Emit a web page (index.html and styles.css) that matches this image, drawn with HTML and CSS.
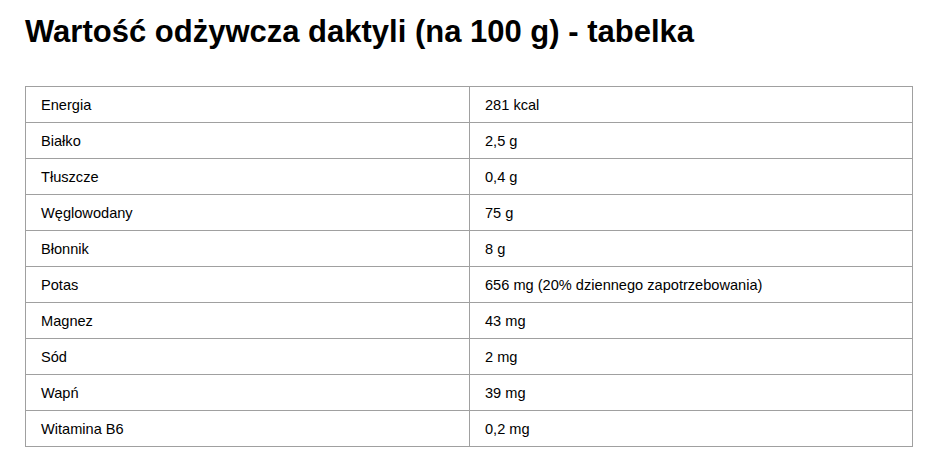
FILE: index.html
```html
<!DOCTYPE html>
<html lang="pl">
<head>
<meta charset="utf-8">
<link rel="stylesheet" href="styles.css">
</head>
<body>
<div class="page">
  <h2 class="title">Wartość odżywcza daktyli (na 100 g) - tabelka</h2>
  <table class="nutri">
    <tbody>
      <tr><td>Energia</td><td>281 kcal</td></tr>
      <tr><td>Białko</td><td>2,5 g</td></tr>
      <tr><td>Tłuszcze</td><td>0,4 g</td></tr>
      <tr><td>Węglowodany</td><td>75 g</td></tr>
      <tr><td>Błonnik</td><td>8 g</td></tr>
      <tr><td>Potas</td><td>656 mg (20% dziennego zapotrzebowania)</td></tr>
      <tr><td>Magnez</td><td>43 mg</td></tr>
      <tr><td>Sód</td><td>2 mg</td></tr>
      <tr><td>Wapń</td><td>39 mg</td></tr>
      <tr><td>Witamina B6</td><td>0,2 mg</td></tr>
    </tbody>
  </table>
</div>
</body>
</html>
```
FILE: styles.css
```css
html, body {
  margin: 0;
  padding: 0;
  background: #fff;
}
.page {
  padding: 14px 27px 0 25px;
  font-family: "Liberation Sans", Arial, sans-serif;
  color: #000;
}
.title {
  margin: 0 0 36px 0;
  font-size: 31px;
  line-height: 36px;
  font-weight: bold;
}
.nutri {
  width: 888px;
  border-collapse: collapse;
  font-size: 14.6px;
}
.nutri td {
  border: 1px solid #a0a0a0;
  height: 36px;
  padding: 0 15px;
  box-sizing: border-box;
  vertical-align: middle;
}
.nutri td:first-child {
  width: 444px;
}
```
